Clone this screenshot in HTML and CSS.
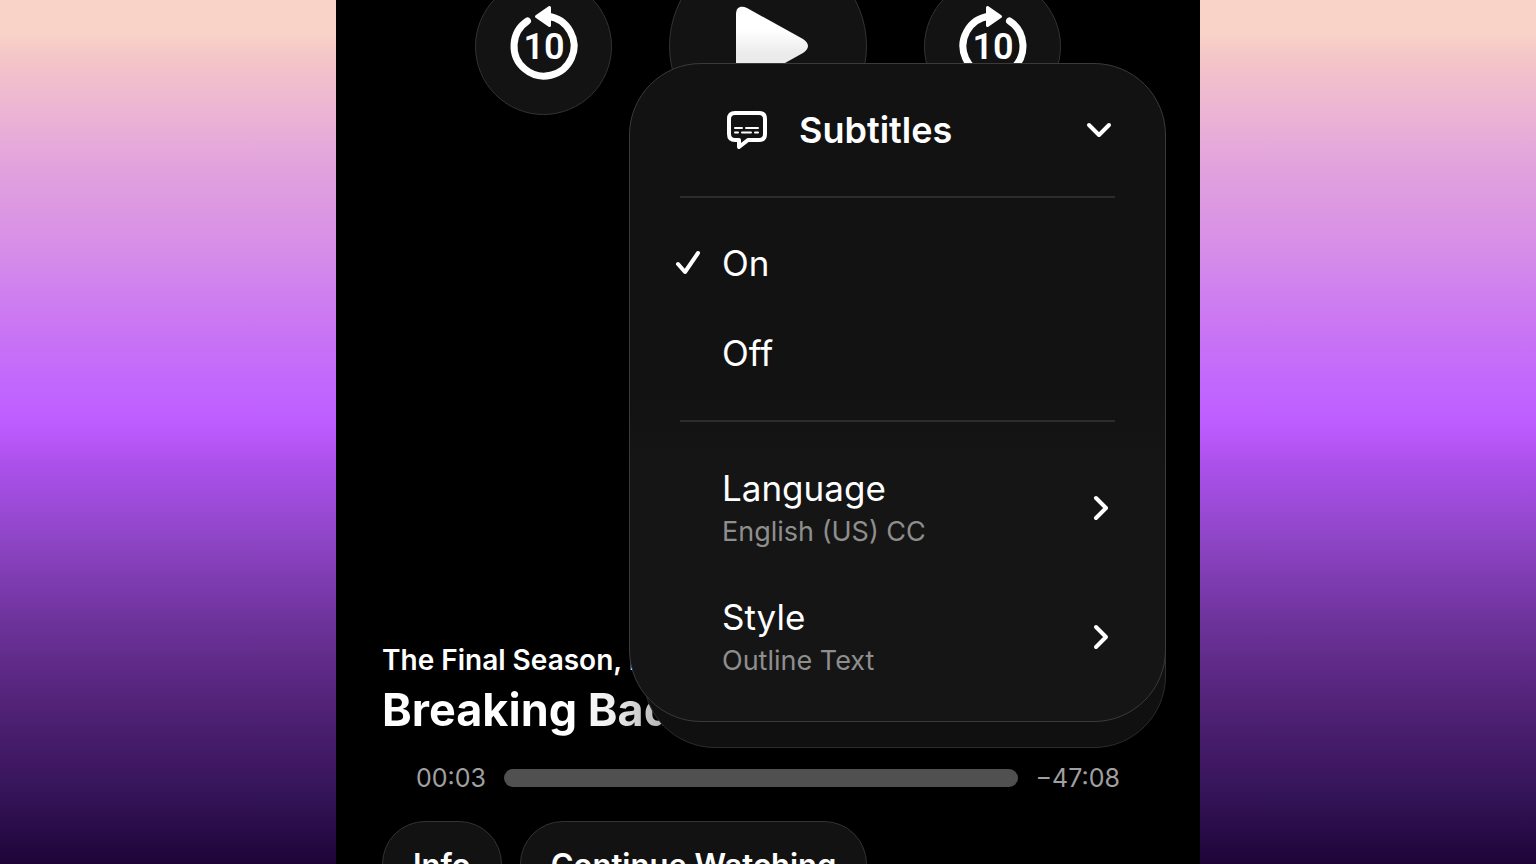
FILE: index.html
```html
<!DOCTYPE html>
<html lang="en">
<head>
<meta charset="utf-8">
<title>Breaking Bad – Subtitles</title>
<link rel="stylesheet" href="styles.css">
</head>
<body>
<main class="player">
  <div class="transport">
    <button class="round" type="button" aria-label="Back 10 seconds">
      <svg class="skip" viewBox="0 0 72 76" aria-hidden="true">
        <path class="skip-ring" d="M19.500 13A30 30 0 1 0 40 8.300"/>
        <path class="skip-head" d="M28.500 8.500L41.500 -0.500V17.500Z"/>
        <text class="skip-number" x="36" y="51">10</text>
      </svg>
    </button>
    <button class="round round-large" type="button" aria-label="Play">
      <svg class="play" viewBox="0 0 74 82" aria-hidden="true">
        <defs>
          <linearGradient id="play-fill" x1="0" y1="0" x2="0" y2="1">
            <stop offset="0.300" stop-color="#fff"/>
            <stop offset="0.600" stop-color="#ebebeb"/>
          </linearGradient>
        </defs>
        <path fill="url(#play-fill)" d="M1 9C1 2 6 0 12 3L68 34Q78 41 68 48L12 79C6 82 1 80 1 73Z"/>
      </svg>
    </button>
    <button class="round" type="button" aria-label="Forward 10 seconds">
      <svg class="skip" viewBox="0 0 72 76" aria-hidden="true">
        <path class="skip-ring" d="M52.500 13A30 30 0 1 1 32 8.300"/>
        <path class="skip-head" d="M43.500 8.500L30.500 -0.500V17.500Z"/>
        <text class="skip-number" x="36" y="51">10</text>
      </svg>
    </button>
  </div>

  <section class="details">
    <p class="episode">The Final Season, E1</p>
    <h1 class="title">Breaking Bad</h1>
    <div class="timeline">
      <span>00:03</span>
      <input class="scrubber" type="range" min="0" max="2831" value="3" aria-label="Playback position">
      <span>−47:08</span>
    </div>
    <div class="actions">
      <button class="pill" type="button">Info</button>
      <button class="pill" type="button">Continue Watching</button>
    </div>
  </section>

  <div class="menu-stack">
    <div class="menu">
      <button class="menu-head" type="button" aria-expanded="true">
        <svg class="bubble" viewBox="0 0 42 40" aria-hidden="true">
          <path class="bubble-outline" d="M9 3H33Q39 3 39 9V24Q39 30 33 30H22L13 37V30H9Q3 30 3 24V9Q3 3 9 3Z"/>
          <path class="bubble-lines" d="M9 18H16M20 18H32M9 22.500H12M16 22.500H25M29 22.500H32"/>
        </svg>
        <span>Subtitles</span>
        <svg class="chevron-down" viewBox="0 0 26 16" aria-hidden="true"><path d="M3 3L13 13L23 3"/></svg>
      </button>
      <fieldset class="choices" aria-label="Subtitles">
        <label class="choice">
          <input type="radio" name="subtitles" checked>
          <svg class="check" viewBox="0 0 24 24" aria-hidden="true"><path d="M2 13L9 21L22 2"/></svg>
          <span>On</span>
        </label>
        <label class="choice">
          <input type="radio" name="subtitles">
          <svg class="check" viewBox="0 0 24 24" aria-hidden="true"><path d="M2 13L9 21L22 2"/></svg>
          <span>Off</span>
        </label>
      </fieldset>
      <div class="links">
        <button class="link-row" type="button">
          <span class="link-text"><span>Language</span><span class="value">English (US) CC</span></span>
          <svg class="chevron-right" viewBox="0 0 16 26" aria-hidden="true"><path d="M3 3L13 13L3 23"/></svg>
        </button>
        <button class="link-row" type="button">
          <span class="link-text"><span>Style</span><span class="value">Outline Text</span></span>
          <svg class="chevron-right" viewBox="0 0 16 26" aria-hidden="true"><path d="M3 3L13 13L3 23"/></svg>
        </button>
      </div>
    </div>
  </div>
</main>
</body>
</html>
```
FILE: styles.css
```css
* { box-sizing: border-box; }

body {
  margin: 0;
  font-family: Inter, "Liberation Sans", sans-serif;
  color: #fff;
  background: linear-gradient(#f9d2c8 4%, #f3c4c8 7%, #ecb4d4 13%, #e2a3dc 19%, #d892e6 27%, #ca75f3 38%, #c064ff 46%, #bd5cff 49%, #ab50ea 54%, #9046c8 62%, #6a3196 73%, #4e2072 83%, #341458 92%, #1d0438);
}

button {
  margin: 0;
  padding: 0;
  border: 0;
  background: none;
  color: inherit;
  font: inherit;
  text-align: left;
}

svg { display: block; fill: none; }

.player {
  position: relative;
  display: flex;
  flex-direction: column;
  justify-content: space-between;
  width: 56.25%;
  height: 100vh;
  margin: 0 auto;
  overflow: hidden;
  background: #000;
}

.transport {
  display: flex;
  flex-shrink: 0;
  justify-content: center;
  align-items: center;
  gap: 57px;
  margin-top: -53px;
}

.round {
  display: grid;
  place-items: center;
  width: 137px;
  height: 137px;
  border: 1px solid #333;
  border-radius: 50%;
  background: #131313;
}
.round-large { width: 198px; height: 198px; }

.skip { width: 72px; height: 76px; overflow: visible; }
.skip-ring { stroke: #fff; stroke-width: 7px; stroke-linecap: round; }
.skip-head { fill: #fff; stroke: #fff; stroke-width: 3px; stroke-linejoin: round; }
.skip-number {
  fill: #fff;
  font-family: Roboto, sans-serif;
  font-size: 36px;
  font-weight: 600;
  text-anchor: middle;
}
.play { width: 74px; height: 82px; margin-left: 8px; }

.details { flex-shrink: 0; padding: 0 46px; margin-bottom: -43px; }
.episode { margin: 0; font-size: 28px; line-height: 36px; font-weight: 600; }
.title {
  width: max-content;
  margin: 2px 0 0;
  font-size: 45px;
  line-height: 60px;
  font-weight: 700;
  color: transparent;
  background: linear-gradient(90deg, #fff 190px, #eee 230px, #b4b4b4 280px);
  background-clip: text;
}
.timeline {
  display: flex;
  align-items: center;
  gap: 18px;
  padding: 0 34px;
  margin-top: 22px;
  font-size: 25px;
  line-height: 32px;
  color: #a0a0a0;
}
.scrubber {
  appearance: none;
  flex: 1;
  min-width: 0;
  height: 18px;
  margin: 0;
  border-radius: 9px;
  background: #505050;
}
.scrubber::-webkit-slider-thumb { appearance: none; width: 0; height: 18px; }

.actions { display: flex; gap: 18px; margin-top: 27px; }
.pill {
  height: 86px;
  padding: 0 30px;
  border: 1px solid #333;
  border-radius: 43px;
  background: #121212;
  font-size: 31px;
  font-weight: 600;
  white-space: nowrap;
}

/* Popover, with the edge of the sheet behind it showing below */
.menu-stack {
  position: absolute;
  top: 63px;
  right: 34px;
  width: 537px;
  isolation: isolate;
}
.menu-stack::before {
  content: "";
  position: absolute;
  z-index: -1;
  inset: 50% 0 -26px 14px;
  border: 1px solid #2c2c2c;
  border-radius: 72px;
  background: #101010;
}
.menu {
  border: 1px solid #3a3a3a;
  border-radius: 72px;
  background: linear-gradient(#121212 50%, #151515 62%);
  font-size: 35px;
  line-height: 44px;
}
.menu-head {
  display: grid;
  grid-template-columns: 42px 1fr auto;
  align-items: center;
  gap: 31px;
  width: 100%;
  height: 132px;
  padding: 0 53px 0 96px;
  font-size: 36px;
  font-weight: 600;
}
.bubble { width: 42px; height: 40px; }
.bubble-outline { stroke: #fff; stroke-width: 4px; stroke-linejoin: round; }
.bubble-lines { stroke: #fff; stroke-width: 2px; stroke-linecap: round; }
.chevron-down { width: 26px; height: 16px; }
.chevron-right { width: 16px; height: 26px; }
.chevron-down path, .chevron-right path, .check path {
  stroke: #fff;
  stroke-width: 4px;
  stroke-linecap: round;
  stroke-linejoin: round;
}

.choices {
  margin: 0 50px;
  padding: 20px 0 22px;
  border: solid #2c2c2c;
  border-width: 2px 0;
}
.choice {
  display: grid;
  grid-template-columns: 24px 1fr;
  align-items: center;
  column-gap: 22px;
  height: 90px;
  margin-left: -4px;
}
.choice input { appearance: none; grid-area: 1 / 1; width: 24px; height: 24px; margin: 0; }
.choice span { grid-area: 1 / 2; }
.check { grid-area: 1 / 1; visibility: hidden; width: 24px; height: 24px; overflow: visible; }
input:checked + .check { visibility: visible; }

.links { padding: 21px 0 20px; }
.link-row {
  display: flex;
  justify-content: space-between;
  align-items: center;
  width: 100%;
  height: 129px;
  padding: 0 56px 0 92px;
}
.link-text { display: grid; padding-top: 4px; }
.value { font-size: 27px; color: #8e8e8e; }
```
